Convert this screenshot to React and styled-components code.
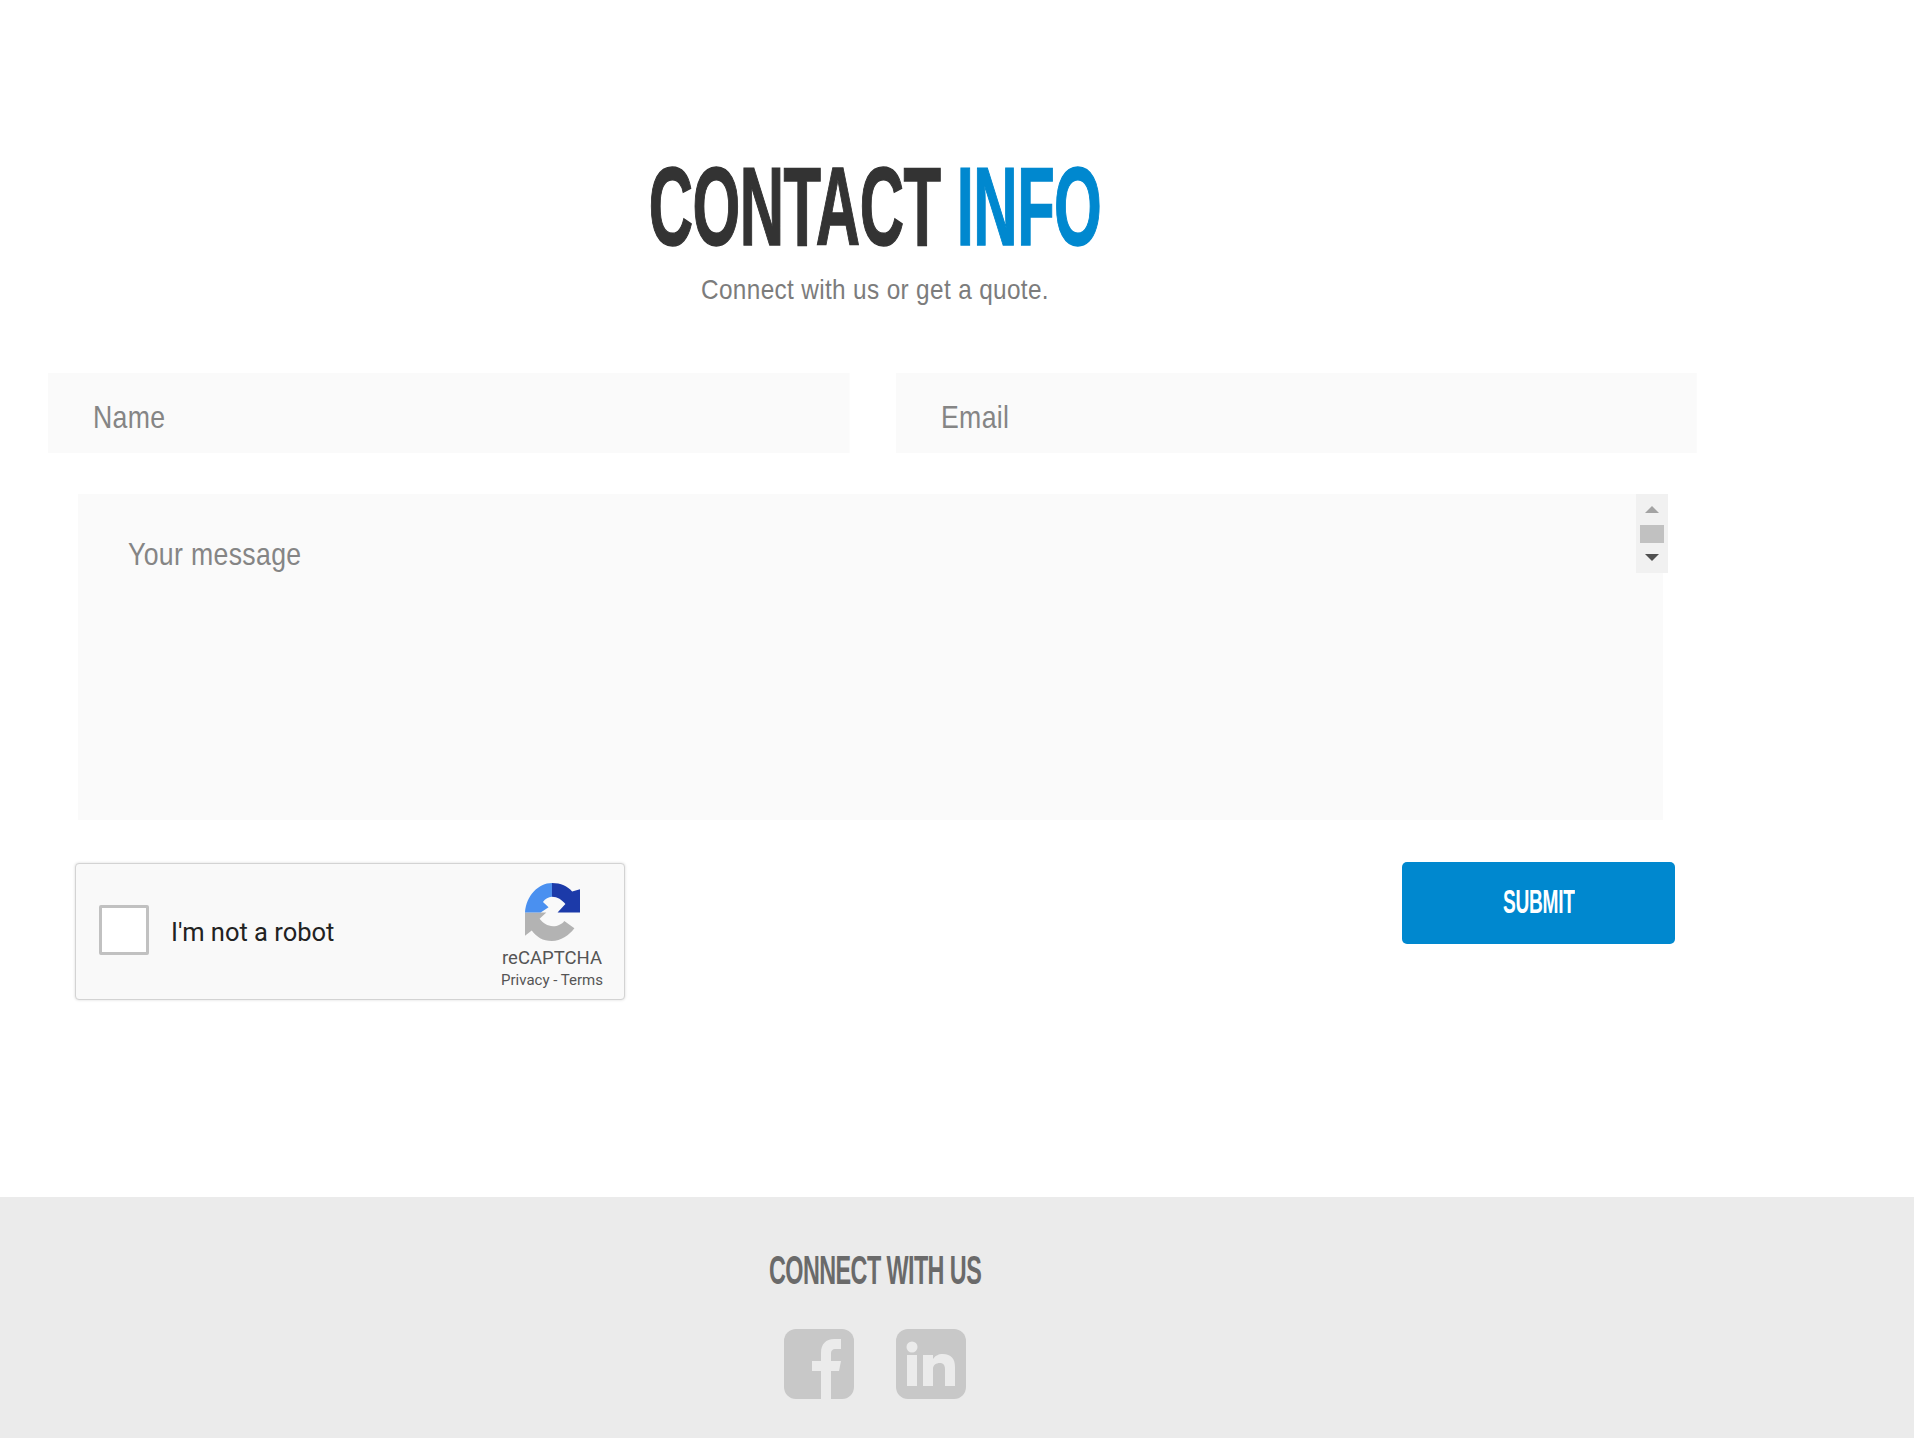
import styled, { createGlobalStyle } from "styled-components";

const GlobalStyle = createGlobalStyle`
    html, body { margin: 0; padding: 0; background: #fff; }
    body { font-family: "Liberation Sans", Arial, sans-serif; }
`;

const Page = styled.div`
    width: 1914px;
    height: 1438px;
    display: flex;
    flex-direction: column;
    overflow: hidden;
`;

const Main = styled.main`
    height: 1197px;
    width: 1750px;
    padding-top: 151px;
    box-sizing: border-box;
`;

/* no condensed font on the box, so the narrow text is squeezed with scaleX */
const Title = styled.h1`
    margin: 0;
    height: 112px;
    line-height: 112px;
    text-align: center;
    font-size: 112px;
    font-weight: 700;
    letter-spacing: -1px;
    color: #333;
    white-space: nowrap;
    -webkit-text-stroke: 1.5px currentColor;
    transform: scaleX(0.548);
`;

const Accent = styled.span`
    color: #0088cf;
`;

const Subtitle = styled.p`
    margin: 10px 0 0;
    height: 28px;
    line-height: 34px;
    text-align: center;
    font-size: 28px;
    letter-spacing: 0.4px;
    color: #7c7c7c;
    transform: scaleX(0.87);
`;

const Row = styled.div`
    display: grid;
    grid-template-columns: 802px 801px;
    column-gap: 46px;
    margin: 72px 0 0 48px;
`;

const Field = styled.input`
    width: 120%;
    height: 80px;
    box-sizing: border-box;
    border: 0;
    outline: 0;
    padding: 8px 54px 0;
    background: #fafafa;
    font-family: "Liberation Sans", Arial, sans-serif;
    font-size: 32px;
    letter-spacing: 0.4px;
    color: #777;
    transform: scaleX(0.8333);
    transform-origin: left center;
    &::placeholder { color: #858585; opacity: 1; }
`;

const MessageWrap = styled.div`
    position: relative;
    width: 1585px;
    height: 326px;
    margin: 41px 0 0 78px;
`;

const Message = styled.textarea`
    display: block;
    width: 120%;
    height: 100%;
    box-sizing: border-box;
    border: 0;
    outline: 0;
    resize: none;
    overflow: hidden;
    padding: 42px 60px;
    background: #fafafa;
    font-family: "Liberation Sans", Arial, sans-serif;
    font-size: 32px;
    letter-spacing: 0.4px;
    color: #777;
    transform: scaleX(0.8333);
    transform-origin: left center;
    &::placeholder { color: #858585; opacity: 1; }
`;

const Scroll = styled.div`
    position: absolute;
    top: 0;
    right: -5px;
    width: 32px;
    height: 79px;
    background: #f1f1f1;
    display: flex;
    flex-direction: column;
    align-items: center;
`;

const Arrow = styled.i`
    width: 0;
    height: 0;
    margin-top: ${p => p.$mt}px;
    border-left: 7px solid transparent;
    border-right: 7px solid transparent;
    ${p => p.$down
        ? "border-top: 7px solid #505050;"
        : "border-bottom: 7px solid #a3a3a3;"}
`;

const Thumb = styled.div`
    width: 24px;
    height: 18px;
    margin-top: 12px;
    background: #c1c1c1;
`;

const Actions = styled.div`
    display: flex;
    justify-content: space-between;
    align-items: flex-start;
    margin: 42px 0 0 75px;
    width: 1600px;
`;

const Captcha = styled.div`
    width: 550px;
    height: 137px;
    margin-top: 1px;
    box-sizing: border-box;
    display: flex;
    align-items: center;
    padding: 0 20px 0 23px;
    background: #f9f9f9;
    border: 1px solid #d3d3d3;
    border-radius: 4px;
    box-shadow: 0 0 3px rgba(0, 0, 0, 0.15);
`;

const CheckBox = styled.div`
    width: 50px;
    height: 50px;
    margin-top: -3px;
    box-sizing: border-box;
    background: #fff;
    border: 3px solid #c1c1c1;
    border-radius: 2px;
`;

const RobotLabel = styled.span`
    margin-left: 22px;
    flex: 1;
    font-family: Roboto, sans-serif;
    font-size: 25.5px;
    color: #222;
`;

const Brand = styled.div`
    display: flex;
    flex-direction: column;
    align-items: center;
    width: 104px;
    padding-top: 8px;
`;

const BrandName = styled.div`
    margin-top: 6px;
    font-family: Roboto, sans-serif;
    font-size: 18.5px;
    line-height: 22px;
    color: #555;
`;

const BrandLinks = styled.div`
    margin-top: 2px;
    font-family: Roboto, sans-serif;
    font-size: 15px;
    line-height: 18px;
    white-space: nowrap;
    color: #555;
`;

const Submit = styled.button`
    width: 273px;
    height: 82px;
    padding: 0 0 3px;
    border: 0;
    border-radius: 5px;
    background: #0088cf;
`;

const SubmitLabel = styled.span`
    display: inline-block;
    color: #fff;
    font-family: "Liberation Sans", Arial, sans-serif;
    font-size: 33px;
    font-weight: 700;
    letter-spacing: -0.5px;
    transform: scaleX(0.58);
`;

const Footer = styled.footer`
    height: 241px;
    width: 100%;
    background: #ebebeb;
    box-sizing: border-box;
    padding-top: 53px;
`;

const FooterInner = styled.div`
    width: 1750px;
    display: flex;
    flex-direction: column;
    align-items: center;
`;

const FooterTitle = styled.h2`
    margin: 0;
    height: 40px;
    line-height: 40px;
    font-size: 41px;
    font-weight: 700;
    letter-spacing: -1px;
    white-space: nowrap;
    color: #6a6a6a;
    transform: scaleX(0.57);
`;

const Socials = styled.div`
    display: flex;
    gap: 40px;
    margin-top: 38px;
`;

const RecaptchaLogo = () => (
    <svg width="55" height="58" viewBox="0 0 49 55" preserveAspectRatio="none">
        <path fill="#b3b3b3" d="M0 28H19L13 34C16 38 20 41 25 41C29 41 33 39 35 36L44 43C39 50 32 55 24 55C16 55 10 51 6 45L0 50Z" />
        <path fill="#4a90f0" d="M0 28C1 12 12 0 24 0V13C21 13 18 15 16 18L21 23L14 28Z" />
        <path fill="#1c3aa9" d="M24 0C32 0 38 3 42 8L49 6V28H29L36 20C33 16 29 13 24 13Z" />
    </svg>
);

const FacebookIcon = () => (
    <svg width="72" height="74" viewBox="0 0 72 74">
        <rect x="1" y="1" width="70" height="70" rx="12" fill="#c8c8c8" />
        <path fill="#ebebeb" d="M38 74V43H29V33H38V25C38 16 43 11 51 11H58V21H53C49 21 48 23 48 26V33H58L56 43H48V74Z" />
    </svg>
);

const LinkedinIcon = () => (
    <svg width="72" height="74" viewBox="0 0 72 74">
        <rect x="1" y="1" width="70" height="70" rx="12" fill="#c8c8c8" />
        <circle cx="17" cy="19" r="5.5" fill="#ebebeb" />
        <path fill="#ebebeb" d="M12 27H22V58H12ZM28 27H38V31C40 28 43 26 48 26C56 26 60 31 60 39V58H50V41C50 37 48 35 45 35C41 35 38 37 38 41V58H28Z" />
    </svg>
);

export default function App() {
    return (
        <Page>
            <GlobalStyle />
            <Main>
                <Title>CONTACT <Accent>INFO</Accent></Title>
                <Subtitle>Connect with us or get a quote.</Subtitle>
                <Row>
                    <Field placeholder="Name" />
                    <Field placeholder="Email" />
                </Row>
                <MessageWrap>
                    <Message placeholder="Your message" />
                    <Scroll>
                        <Arrow $mt={12} />
                        <Thumb />
                        <Arrow $down $mt={11} />
                    </Scroll>
                </MessageWrap>
                <Actions>
                    <Captcha>
                        <CheckBox />
                        <RobotLabel>I'm not a robot</RobotLabel>
                        <Brand>
                            <RecaptchaLogo />
                            <BrandName>reCAPTCHA</BrandName>
                            <BrandLinks>Privacy - Terms</BrandLinks>
                        </Brand>
                    </Captcha>
                    <Submit><SubmitLabel>SUBMIT</SubmitLabel></Submit>
                </Actions>
            </Main>
            <Footer>
                <FooterInner>
                    <FooterTitle>CONNECT WITH US</FooterTitle>
                    <Socials>
                        <FacebookIcon />
                        <LinkedinIcon />
                    </Socials>
                </FooterInner>
            </Footer>
        </Page>
    );
}
